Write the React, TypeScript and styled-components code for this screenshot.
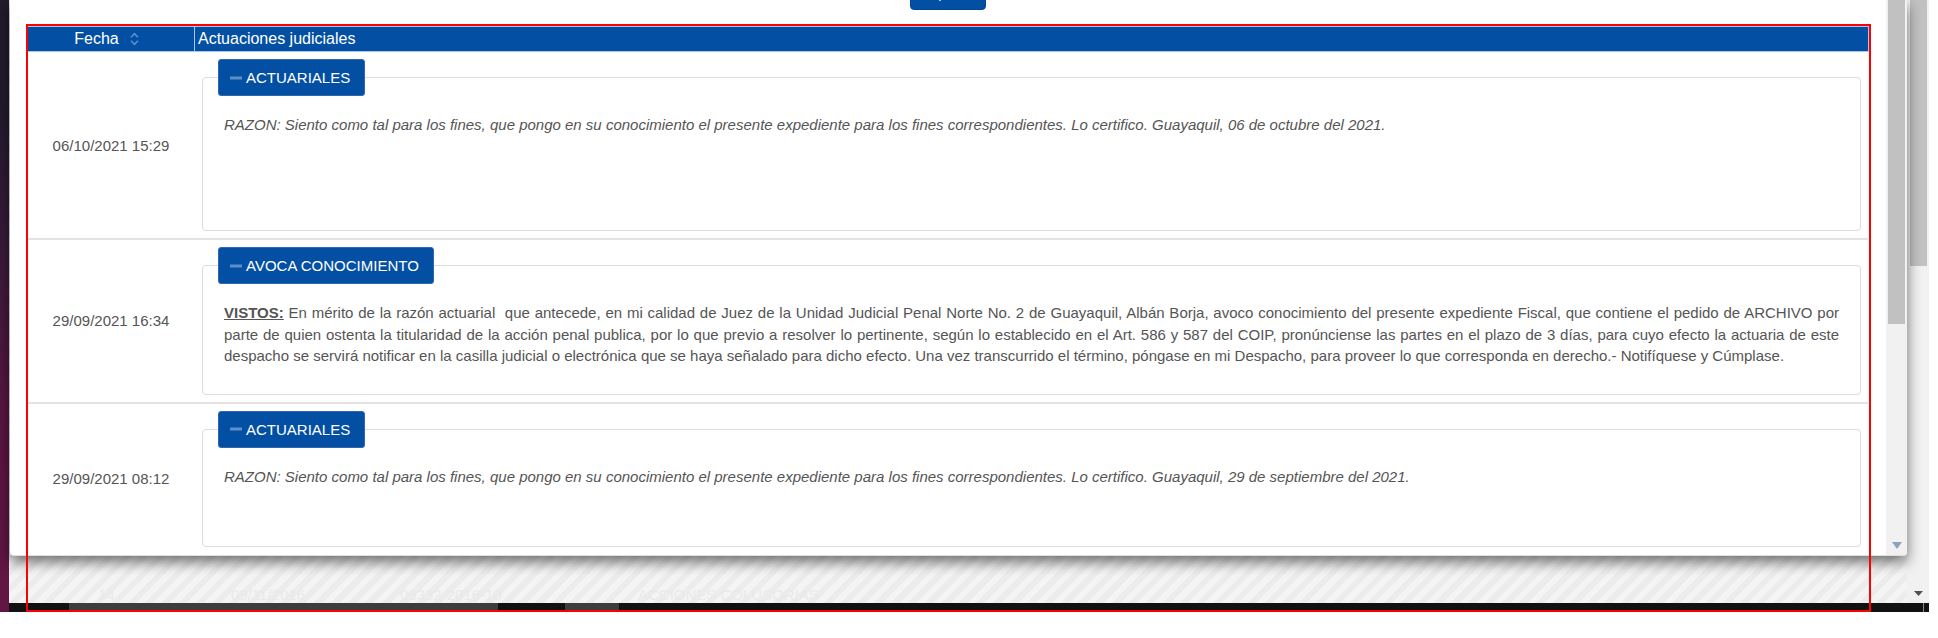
import React from "react";
import styled, { createGlobalStyle } from "styled-components";

const GlobalStyle = createGlobalStyle`
  html, body { margin: 0; padding: 0; background: #fff; }
  body { font-family: "Liberation Sans", Arial, sans-serif; }
  * { box-sizing: border-box; }
`;

const BLUE = "#034fa3";

const Page = styled.div`
  position: relative;
  width: 1938px;
  height: 638px;
  overflow: hidden;
  background: #fff;
`;

const Screen = styled.div`
  display: flex;
  width: 1929px;
  height: 612px;
`;

const SideStrip = styled.div`
  width: 9px;
  flex: none;
  background: linear-gradient(180deg, #211b2b 0%, #231b2d 18%, #3a1a3b 42%, #591542 68%, #631643 100%);
`;

const Workspace = styled.div`
  flex: 1;
  display: flex;
  flex-direction: column;
  min-width: 0;
`;

const Upper = styled.div`
  flex: 1;
  display: flex;
  min-height: 0;
`;

const Viewport = styled.div`
  flex: 1;
  display: flex;
  flex-direction: column;
  min-width: 0;
  background: repeating-linear-gradient(135deg, #f4f4f4 0 6px, #ececec 6px 12px);
`;

const Modal = styled.div`
  position: relative;
  z-index: 1;
  flex: none;
  display: flex;
  height: 556px;
  margin-left: 1px;
  background: #fff;
  border-bottom: 1px solid #e0e0e0;
  border-radius: 0 0 4px 4px;
  box-shadow: 0 6px 14px rgba(0, 0, 0, 0.55);
  overflow: hidden;
`;

const ModalBody = styled.div`
  flex: 1;
  min-width: 0;
  padding: 0 17px;
  overflow: hidden;
`;

const PrintButton = styled.button`
  display: block;
  margin: -24px auto 0;
  padding: 6px 12px;
  font: 14px/20px "Liberation Sans", Arial, sans-serif;
  color: #fff;
  background: ${BLUE};
  border: 1px solid #03468f;
  border-radius: 4px;
`;

const Table = styled.div`
  margin-top: 16px;
`;

const HeadRow = styled.div`
  display: grid;
  grid-template-columns: 166px 1fr;
  height: 26px;
  border: 1px solid #a9c7ea;
  background: ${BLUE};
  color: #fff;
  font-size: 16px;
`;

const HeadCell = styled.div<{ $center?: boolean }>`
  display: flex;
  align-items: center;
  gap: 11px;
  justify-content: ${(p) => (p.$center ? "center" : "flex-start")};
  padding: ${(p) => (p.$center ? "0 9px 0 0" : "0 0 0 3px")};
  & + & {
    border-left: 1px solid #a9c7ea;
  }
`;

const BodyRow = styled.div`
  display: grid;
  grid-template-columns: 166px 1fr;
  margin: 0 1px;
  & + & {
    border-top: 2px solid #e3e3e3;
  }
`;

const DateCell = styled.div`
  display: flex;
  align-items: center;
  justify-content: center;
  font-size: 15px;
  color: #555;
`;

const ContentCell = styled.div`
  min-width: 0;
  padding: 7px 7px 7px 8px;
`;

const Group = styled.fieldset`
  margin: 0;
  min-width: 0;
  padding: 0 15px;
  border: 1px solid #dcdcdc;
  border-radius: 4px;
`;

const GroupLegend = styled.legend`
  margin: 0;
  padding: 0;
`;

const LegendBadge = styled.div`
  display: flex;
  align-items: center;
  gap: 4px;
  height: 37px;
  padding: 0 14px 0 11px;
  background: ${BLUE};
  color: #fff;
  border: 1px solid #2d68b0;
  border-radius: 3px;
  font-size: 15px;
  white-space: nowrap;
`;

const GroupBody = styled.div<{ $pb: number }>`
  padding: 18px 6px ${(p) => p.$pb}px;
`;

const Para = styled.p<{ $italic?: boolean }>`
  margin: 0 0 10px;
  font-size: 15px;
  line-height: 1.42857;
  color: #555;
  text-align: justify;
  font-style: ${(p) => (p.$italic ? "italic" : "normal")};
`;

const Lead = styled.b`
  text-decoration: underline;
`;

const Backdrop = styled.div`
  flex: 1;
  display: grid;
  grid-template-columns: 133px 169px 238px auto;
  padding: 30px 0 0 89px;
  font-size: 15px;
  line-height: 17px;
  color: #e9e9e9;
  white-space: nowrap;
  overflow: hidden;
`;

const NarrowText = styled.span`
  font-family: "Liberation Sans Narrow", "Arial Narrow", "Liberation Sans", sans-serif;
  font-size: 15px;
`;

const ScrollTrack = styled.div<{ $w: number; $pad: string }>`
  flex: none;
  width: ${(p) => p.$w}px;
  display: flex;
  flex-direction: column;
  align-items: stretch;
  padding: ${(p) => p.$pad};
  background: #f1f1f1;
`;

const ScrollThumb = styled.div<{ $h: number }>`
  height: ${(p) => p.$h}px;
  background: #c1c1c1;
`;

const ScrollArrow = styled.div<{ $bottom: number }>`
  margin-top: auto;
  margin-bottom: ${(p) => p.$bottom}px;
  display: flex;
  justify-content: center;
`;

const HScroll = styled.div`
  flex: none;
  height: 9px;
  display: flex;
  background: #111;
`;

const HThumb = styled.div<{ $w: number; $ml: number }>`
  width: ${(p) => p.$w}px;
  margin-left: ${(p) => p.$ml}px;
  background: #3d3d3d;
`;

const HEdge = styled.div`
  width: 1px;
  margin-left: auto;
  margin-right: 5px;
  background: #8a8a8a;
`;

const Highlight = styled.div`
  position: absolute;
  left: 26px;
  top: 24px;
  width: 1845px;
  height: 588px;
  border: 2px solid #ff0000;
  pointer-events: none;
  z-index: 5;
`;

const SortIcon = () => (
  <svg width="9" height="14" viewBox="0 0 9 14" fill="none">
    <path d="M1 5.2 L4.5 1.6 L8 5.2" stroke="#5b8fd0" strokeWidth="1.6" />
    <path d="M1 8.8 L4.5 12.4 L8 8.8" stroke="#5b8fd0" strokeWidth="1.6" />
  </svg>
);

const MinusIcon = () => (
  <svg width="12" height="4" viewBox="0 0 12 4">
    <rect x="0" y="0.5" width="12" height="3" fill="#5f8fc9" />
  </svg>
);

const DownArrow = ({ color, w, h }: { color: string; w: number; h: number }) => (
  <svg width={w} height={h} viewBox={`0 0 ${w} ${h}`}>
    <path d={`M0 0 L${w} 0 L${w / 2} ${h} Z`} fill={color} />
  </svg>
);

type Entry = {
  date: string;
  title: string;
  italic?: boolean;
  lead?: string;
  text: string;
  blanks: number;
  pb: number;
};

const entries: Entry[] = [
  {
    date: "06/10/2021 15:29",
    title: "ACTUARIALES",
    italic: true,
    text:
      "RAZON: Siento como tal para los fines, que pongo en su conocimiento el presente expediente para los fines correspondientes. Lo certifico. Guayaquil, 06 de octubre del 2021.",
    blanks: 2,
    pb: 22,
  },
  {
    date: "29/09/2021 16:34",
    title: "AVOCA CONOCIMIENTO",
    lead: "VISTOS:",
    text:
      " En mérito de la razón actuarial\u00a0 que antecede, en mi calidad de Juez de la Unidad Judicial Penal Norte No. 2 de Guayaquil, Albán Borja, avoco conocimiento del presente expediente Fiscal, que contiene el pedido de ARCHIVO por parte de quien ostenta la titularidad de la acción penal publica, por lo que previo a resolver lo pertinente, según lo establecido en el Art. 586 y 587 del COIP, pronúnciense las partes en el plazo de 3 días, para cuyo efecto la actuaria de este despacho se servirá notificar en la casilla judicial o electrónica que se haya señalado para dicho efecto. Una vez transcurrido el término, póngase en mi Despacho, para proveer lo que corresponda en derecho.- Notifíquese y Cúmplase.",
    blanks: 0,
    pb: 17,
  },
  {
    date: "29/09/2021 08:12",
    title: "ACTUARIALES",
    italic: true,
    text:
      "RAZON: Siento como tal para los fines, que pongo en su conocimiento el presente expediente para los fines correspondientes. Lo certifico. Guayaquil, 29 de septiembre del 2021.",
    blanks: 1,
    pb: 18,
  },
];

export default function App() {
  return (
    <Page>
      <GlobalStyle />
      <Screen>
        <SideStrip />
        <Workspace>
          <Upper>
            <Viewport>
              <Modal>
                <ModalBody>
                  <PrintButton type="button">Imprimir</PrintButton>
                  <Table>
                    <HeadRow>
                      <HeadCell $center>
                        <span>Fecha</span>
                        <SortIcon />
                      </HeadCell>
                      <HeadCell>Actuaciones judiciales</HeadCell>
                    </HeadRow>
                    {entries.map((e, i) => (
                      <BodyRow key={i}>
                        <DateCell>{e.date}</DateCell>
                        <ContentCell>
                          <Group>
                            <GroupLegend>
                              <LegendBadge>
                                <MinusIcon />
                                <span>{e.title}</span>
                              </LegendBadge>
                            </GroupLegend>
                            <GroupBody $pb={e.pb}>
                              <Para $italic={e.italic}>
                                {e.lead && <Lead>{e.lead}</Lead>}
                                {e.text}
                              </Para>
                              {Array.from({ length: e.blanks }).map((_, k) => (
                                <Para key={k}>{"\u00a0"}</Para>
                              ))}
                            </GroupBody>
                          </Group>
                        </ContentCell>
                      </BodyRow>
                    ))}
                  </Table>
                </ModalBody>
                <ScrollTrack $w={21} $pad="0 2px">
                  <ScrollThumb $h={324} />
                  <ScrollArrow $bottom={6}>
                    <DownArrow color="#8aa3bf" w={10} h={7} />
                  </ScrollArrow>
                </ScrollTrack>
              </Modal>
              <Backdrop>
                <span>14</span>
                <span>09/11/2016</span>
                <span>09332-2016-10</span>
                <NarrowText>ACCIONES COLUSORIAS</NarrowText>
              </Backdrop>
            </Viewport>
            <ScrollTrack $w={22} $pad="0 2px 0 3px">
              <ScrollThumb $h={266} />
              <ScrollArrow $bottom={7}>
                <DownArrow color="#505050" w={9} h={5} />
              </ScrollArrow>
            </ScrollTrack>
          </Upper>
          <HScroll>
            <HThumb $w={429} $ml={60} />
            <HThumb $w={54} $ml={67} />
            <HEdge />
          </HScroll>
        </Workspace>
      </Screen>
      <Highlight />
    </Page>
  );
}
